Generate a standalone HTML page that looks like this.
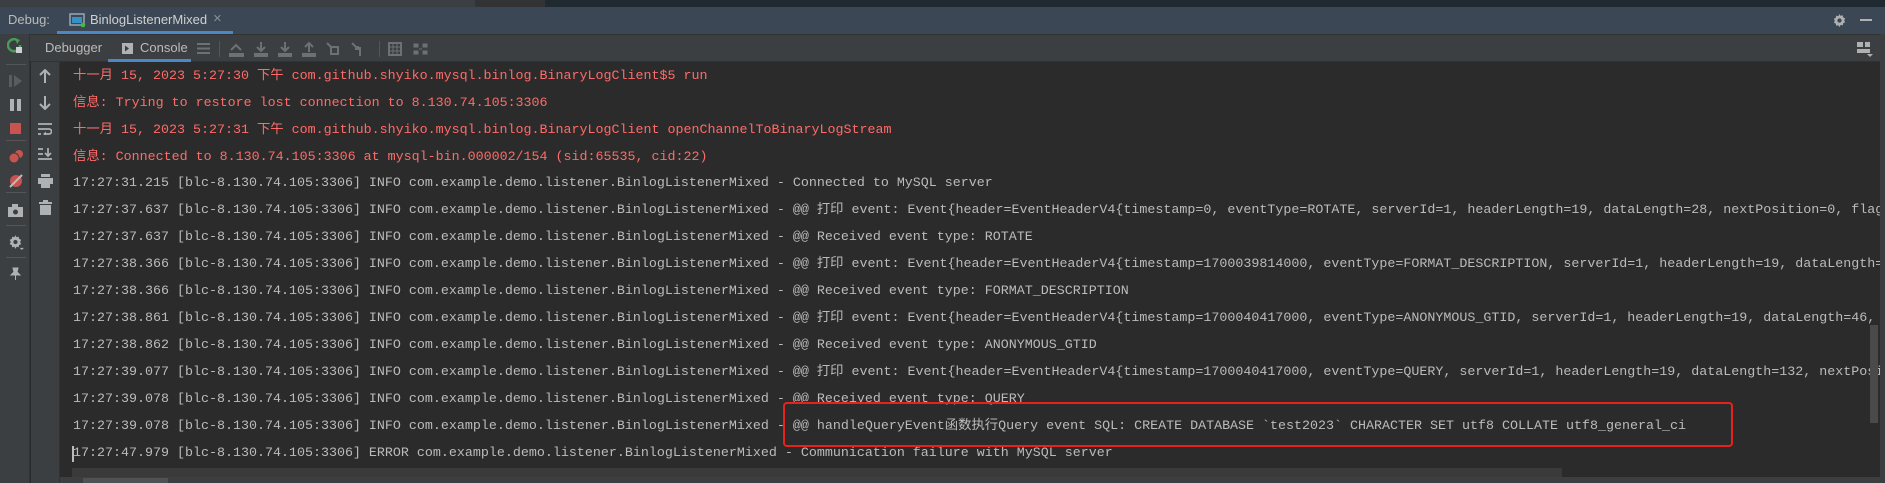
<!DOCTYPE html>
<html><head><meta charset="utf-8"><style>
*{margin:0;padding:0;box-sizing:border-box}
body{width:1885px;height:483px;overflow:hidden;background:#2b2b2b;position:relative;font-family:"Liberation Sans","Noto Sans CJK SC",sans-serif}
.abs{position:absolute}
#top{left:0;top:0;width:1885px;height:7px;background:#1f2a30}
#dbg{left:0;top:7px;width:1885px;height:27px;background:#3b4754;color:#bbb;font-size:13px}
#tb{left:0;top:34px;width:1885px;height:28px;background:#3c3f41;border-top:1px solid #323232;border-bottom:1px solid #323232;color:#bbb;font-size:13px}
#rail1{left:0;top:34px;width:30px;height:449px;background:#3c3f41;border-right:1px solid #333}
#rail2{left:31px;top:62px;width:29px;height:421px;background:#3c3f41;border-right:1px solid #323232}
#out{left:60px;top:62px;width:1820px;height:415px;background:#2b2b2b;overflow:hidden}
.ln{position:absolute;left:13px;white-space:pre;font-family:"Liberation Mono","Noto Sans CJK SC",monospace;font-size:13.33px;line-height:27px;color:#bbbbbb}
.r{color:#ff6b68}
.ic{position:absolute;color:#afb1b3}
</style></head><body>
<div id="top" class="abs">
 <div class="abs" style="left:0;top:0;width:475px;height:7px;background:#3c3f41"></div>
 <div class="abs" style="left:475px;top:0;width:70px;height:7px;background:#313335"></div>
</div>
<div id="dbg" class="abs">
 <span class="abs" style="left:8px;top:5px">Debug:</span>
 <svg class="abs" style="left:69px;top:5px" width="18" height="16"><rect x="1" y="2" width="14" height="11" fill="none" stroke="#9aa7b0" stroke-width="1.5"/><rect x="3" y="5" width="10" height="6" fill="#3592c4"/><circle cx="14" cy="13" r="2.3" fill="#3fbf3f"/></svg>
 <span class="abs" style="left:90px;top:5px;color:#d0d0d0">BinlogListenerMixed</span>
 <span class="abs" style="left:213px;top:3px;color:#8a8f93;font-size:15px">×</span>
 <div class="abs" style="left:57px;top:24px;width:176px;height:3px;background:#4a88c7"></div>
 <svg class="abs" style="left:1832px;top:6px" width="15" height="15" viewBox="0 0 16 16"><path d="M8 1l1.2 2 2.3-.6.4 2.3 2.1 1-1 2.1 1 2.1-2.1 1-.4 2.3-2.3-.6L8 15l-1.2-2-2.3.6-.4-2.3-2.1-1 1-2.1-1-2.1 2.1-1 .4-2.3 2.3.6z" fill="#aeb0b2"/><circle cx="8" cy="8" r="2.3" fill="#3b4754"/></svg>
 <div class="abs" style="left:1860px;top:12px;width:12px;height:2px;background:#aeb0b2"></div>
</div>
<div id="tb" class="abs">
 <span class="abs" style="left:45px;top:5px">Debugger</span>
 <svg class="abs" style="left:122px;top:8px" width="11" height="11"><rect width="11" height="11" fill="#afb1b3"/><path d="M3 2.5l4 3-4 3z" fill="#3c3f41"/></svg>
 <span class="abs" style="left:140px;top:5px">Console</span>
 <div class="abs" style="left:108px;top:24px;width:83px;height:3px;background:#4a88c7"></div>
 <svg class="abs" style="left:197px;top:6px" width="240" height="16" fill="#6e7173">
  <rect x="0" y="2" width="13" height="2"/><rect x="0" y="6.5" width="13" height="2"/><rect x="0" y="11" width="13" height="2"/>
  <rect x="22" y="0" width="1" height="16" fill="#555"/>
  <path d="M33 13h13v2H33zM34 9l5-5 5 5" stroke="#6e7173" stroke-width="2" fill="none"/>
  <path d="M58 13h12v2H58zM64 1v9M60 6l4 4 4-4" stroke="#6e7173" stroke-width="2" fill="none"/>
  <path d="M82 13h12v2H82zM88 1v9M84 6l4 4 4-4" stroke="#6e7173" stroke-width="2" fill="none"/>
  <path d="M106 13h12v2h-12zM112 11V2M108 6l4-4 4 4" stroke="#6e7173" stroke-width="2" fill="none"/>
  <path d="M134 6h7v7h-7z M130 2l4 4" stroke="#6e7173" stroke-width="2" fill="none"/>
  <path d="M155 2l5 5M158 8l3 0 0-3M163 6v9" stroke="#6e7173" stroke-width="2" fill="none"/>
  <rect x="182" y="0" width="1" height="16" fill="#555"/>
  <rect x="192" y="2" width="12" height="12" fill="none" stroke="#6e7173" stroke-width="2"/><path d="M192 6h12M192 10h12M196 2v12M200 2v12" stroke="#6e7173"/>
  <path d="M217 3h4v3h-4zM226 3h4v3h-4zM217 10h4v3h-4zM226 10h4v3h-4zM222 8h3" fill="#6e7173" stroke="#6e7173"/>
 </svg>
 <svg class="abs" style="left:1857px;top:7px" width="16" height="15"><rect x="0" y="0" width="6" height="5" fill="#aeb0b2"/><rect x="8" y="0" width="5" height="5" fill="#aeb0b2"/><rect x="0" y="7" width="13" height="4" fill="#aeb0b2"/><path d="M10 12h6l-3 3z" fill="#aeb0b2"/></svg>
</div>
<div id="rail1" class="abs">
 <svg class="abs" style="left:7px;top:4px" width="16" height="16"><path d="M13 7a6 6 0 1 1-3-5" stroke="#499c54" stroke-width="2.5" fill="none"/><path d="M8 0l5 2-3 4z" fill="#499c54"/><rect x="9" y="9" width="6" height="6" fill="#d0d0d0"/></svg>
 <div class="abs" style="left:6px;top:30px;width:20px;height:1px;background:#555"></div>
 <svg class="abs" style="left:9px;top:40px" width="14" height="14"><rect x="0" y="1" width="3" height="12" fill="#5a5d5f"/><path d="M5 1l8 6-8 6z" fill="#5a5d5f"/></svg>
 <svg class="abs" style="left:10px;top:65px" width="12" height="12"><rect x="0" y="0" width="4" height="12" fill="#afb1b3"/><rect x="7" y="0" width="4" height="12" fill="#afb1b3"/></svg>
 <div class="abs" style="left:10px;top:89px;width:11px;height:11px;background:#c75450"></div>
 <div class="abs" style="left:6px;top:106px;width:20px;height:1px;background:#555"></div>
 <svg class="abs" style="left:8px;top:115px" width="16" height="14"><circle cx="11" cy="5" r="4" fill="#c75450"/><circle cx="6" cy="9" r="5" fill="#c75450" stroke="#3c3f41"/></svg>
 <svg class="abs" style="left:8px;top:139px" width="16" height="16"><circle cx="8" cy="8" r="6" fill="#c75450"/><path d="M2 14L14 2" stroke="#bbb" stroke-width="2"/></svg>
 <div class="abs" style="left:6px;top:158px;width:20px;height:1px;background:#555"></div>
 <svg class="abs" style="left:8px;top:170px" width="15" height="13"><rect x="0" y="3" width="15" height="10" fill="#afb1b3"/><rect x="4" y="0" width="6" height="4" fill="#afb1b3"/><circle cx="7.5" cy="8" r="2.5" fill="#3c3f41"/></svg>
 <div class="abs" style="left:6px;top:191px;width:20px;height:1px;background:#555"></div>
 <svg class="abs" style="left:8px;top:200px" width="17" height="17" viewBox="0 0 16 16"><path d="M7 1l1 2 2-.5.4 2 2 1-1 2 1 2-2 1-.4 2-2-.5L7 14l-1-2-2 .5-.4-2-2-1 1-2-1-2 2-1 .4-2 2 .5z" fill="#afb1b3"/><circle cx="7" cy="7.5" r="2" fill="#3c3f41"/><path d="M11 13h4l-2 2z" fill="#afb1b3"/></svg>
 <div class="abs" style="left:6px;top:223px;width:20px;height:1px;background:#555"></div>
 <svg class="abs" style="left:9px;top:233px" width="13" height="13"><path d="M4 1h5l-1 4 3 3H2l3-3zM6.5 8v5" stroke="#afb1b3" fill="#afb1b3"/></svg>
</div>
<div id="rail2" class="abs">
 <svg class="abs" style="left:8px;top:7px" width="12" height="14"><path d="M6 14V2M1 6l5-5 5 5" stroke="#afb1b3" stroke-width="2" fill="none"/></svg>
 <svg class="abs" style="left:8px;top:34px" width="12" height="14"><path d="M6 0v12M1 8l5 5 5-5" stroke="#afb1b3" stroke-width="2" fill="none"/></svg>
 <svg class="abs" style="left:7px;top:61px" width="14" height="12"><path d="M0 1h14M0 6h11a2.5 2.5 0 0 1 0 5H7M0 11h3" stroke="#afb1b3" stroke-width="1.7" fill="none"/><path d="M8 8.5v5l-3-2.5z" fill="#afb1b3"/></svg>
 <svg class="abs" style="left:7px;top:86px" width="14" height="13"><path d="M0 1h5M0 6h5M0 11h14M10 0v8M7 5l3 3 3-3" stroke="#afb1b3" stroke-width="1.7" fill="none"/></svg>
 <svg class="abs" style="left:7px;top:112px" width="15" height="14"><rect x="3" y="0" width="9" height="3" fill="#afb1b3"/><rect x="0" y="4" width="15" height="6" fill="#afb1b3"/><rect x="3" y="10" width="9" height="4" fill="#afb1b3"/></svg>
 <svg class="abs" style="left:8px;top:138px" width="13" height="15"><rect x="0" y="2" width="13" height="2" fill="#afb1b3"/><rect x="4" y="0" width="5" height="2" fill="#afb1b3"/><rect x="1" y="5" width="11" height="10" fill="#afb1b3"/></svg>
</div>
<div id="out" class="abs">
<div class="ln r" style="top:1px">十一月 15, 2023 5:27:30 下午 com.github.shyiko.mysql.binlog.BinaryLogClient$5 run</div>
<div class="ln r" style="top:28px">信息: Trying to restore lost connection to 8.130.74.105:3306</div>
<div class="ln r" style="top:55px">十一月 15, 2023 5:27:31 下午 com.github.shyiko.mysql.binlog.BinaryLogClient openChannelToBinaryLogStream</div>
<div class="ln r" style="top:82px">信息: Connected to 8.130.74.105:3306 at mysql-bin.000002/154 (sid:65535, cid:22)</div>
<div class="ln" style="top:108px">17:27:31.215 [blc-8.130.74.105:3306] INFO com.example.demo.listener.BinlogListenerMixed - Connected to MySQL server</div>
<div class="ln" style="top:135px">17:27:37.637 [blc-8.130.74.105:3306] INFO com.example.demo.listener.BinlogListenerMixed - @@ 打印 event: Event{header=EventHeaderV4{timestamp=0, eventType=ROTATE, serverId=1, headerLength=19, dataLength=28, nextPosition=0, flags=32}}</div>
<div class="ln" style="top:162px">17:27:37.637 [blc-8.130.74.105:3306] INFO com.example.demo.listener.BinlogListenerMixed - @@ Received event type: ROTATE</div>
<div class="ln" style="top:189px">17:27:38.366 [blc-8.130.74.105:3306] INFO com.example.demo.listener.BinlogListenerMixed - @@ 打印 event: Event{header=EventHeaderV4{timestamp=1700039814000, eventType=FORMAT_DESCRIPTION, serverId=1, headerLength=19, dataLength=100}}</div>
<div class="ln" style="top:216px">17:27:38.366 [blc-8.130.74.105:3306] INFO com.example.demo.listener.BinlogListenerMixed - @@ Received event type: FORMAT_DESCRIPTION</div>
<div class="ln" style="top:243px">17:27:38.861 [blc-8.130.74.105:3306] INFO com.example.demo.listener.BinlogListenerMixed - @@ 打印 event: Event{header=EventHeaderV4{timestamp=1700040417000, eventType=ANONYMOUS_GTID, serverId=1, headerLength=19, dataLength=46, nextPosition=219}}</div>
<div class="ln" style="top:270px">17:27:38.862 [blc-8.130.74.105:3306] INFO com.example.demo.listener.BinlogListenerMixed - @@ Received event type: ANONYMOUS_GTID</div>
<div class="ln" style="top:297px">17:27:39.077 [blc-8.130.74.105:3306] INFO com.example.demo.listener.BinlogListenerMixed - @@ 打印 event: Event{header=EventHeaderV4{timestamp=1700040417000, eventType=QUERY, serverId=1, headerLength=19, dataLength=132, nextPosition=370}}</div>
<div class="ln" style="top:324px">17:27:39.078 [blc-8.130.74.105:3306] INFO com.example.demo.listener.BinlogListenerMixed - @@ Received event type: QUERY</div>
<div class="ln" style="top:351px">17:27:39.078 [blc-8.130.74.105:3306] INFO com.example.demo.listener.BinlogListenerMixed - @@ handleQueryEvent函数执行Query event SQL: CREATE DATABASE `test2023` CHARACTER SET utf8 COLLATE utf8_general_ci</div>
<div class="ln" style="top:378px">17:27:47.979 [blc-8.130.74.105:3306] ERROR com.example.demo.listener.BinlogListenerMixed - Communication failure with MySQL server</div>
<div class="abs" style="left:12px;top:384px;width:2px;height:16px;background:#bbb"></div>
<div class="abs" style="left:12px;top:406px;width:1490px;height:9px;background:#3a3a3a"></div>
<div class="abs" style="left:1810px;top:263px;width:8px;height:98px;background:#4a4a4a"></div>
</div>
<div class="abs" style="left:783px;top:402px;width:950px;height:45px;border:2.5px solid #e8221b;border-radius:4px"></div>
<div class="abs" style="left:60px;top:477px;width:1825px;height:6px;background:#3c3f41"></div>
<div class="abs" style="left:83px;top:478px;width:85px;height:5px;background:#4e5254"></div>
<div class="abs" style="left:1880px;top:34px;width:5px;height:449px;background:#3c3f41"></div>
</body></html>
